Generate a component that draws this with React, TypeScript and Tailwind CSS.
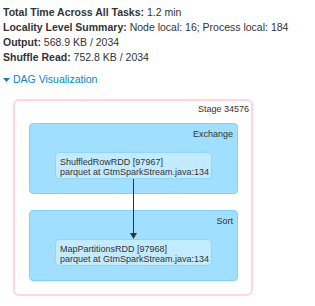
import React from "react";

const summary = [
  { label: "Total Time Across All Tasks:", value: "1.2 min" },
  { label: "Locality Level Summary:", value: "Node local: 16; Process local: 184" },
  { label: "Output:", value: "568.9 KB / 2034" },
  { label: "Shuffle Read:", value: "752.8 KB / 2034" },
];

function Cluster({ name, rdd }: { name: string; rdd: string }) {
  return (
    <div className="ml-[14px] w-[209px] h-[71px] bg-[#a0dfff] border border-[#7fd2ff] rounded-[4px]">
      <div className="pt-[5px] pr-[4px] text-right leading-[10px]">{name}</div>
      <div className="mt-[13px] ml-[25px] w-[157px] h-[27px] bg-[#c3ebff] border border-[#8fd6ff] rounded-[4px] pt-[4px] pl-[4px] leading-[10px]">
        <div>{rdd}</div>
        <div>parquet at GtmSparkStream.java:134</div>
      </div>
    </div>
  );
}

export default function App() {
  return (
    <div className="w-[315px] h-[306px] bg-white font-['Liberation_Sans',Arial,sans-serif] text-[#333]">
      <div className="pt-[5px] pl-[3px] text-[10.5px] leading-[15px]">
        {summary.map((s) => (
          <div key={s.label}>
            <strong className="font-bold">{s.label}</strong> {s.value}
          </div>
        ))}
        <div className="mt-[7px] flex items-center text-[#0088cc]">
          <svg width="7" height="4" viewBox="0 0 7 4" className="mr-[3px]">
            <polygon points="0,0 7,0 3.5,4" fill="#0088cc" />
          </svg>
          DAG Visualization
        </div>
      </div>

      {/* stage */}
      <div className="relative ml-[13px] mt-[12px] w-[240px] h-[197px] border-2 border-[#ffd6dd] rounded-[6px] text-[9px]">
        <div className="pt-[3px] pr-[2px] text-right leading-[10px]">Stage 34576</div>
        <div className="mt-[9px]">
          <Cluster name="Exchange" rdd="ShuffledRowRDD [97967]" />
        </div>
        <div className="mt-[16px]">
          <Cluster name="Sort" rdd="MapPartitionsRDD [97968]" />
        </div>
        <svg width="7" height="60" viewBox="0 0 7 60" className="absolute left-[115px] top-[78px]">
          <line x1="3.5" y1="0" x2="3.5" y2="55" stroke="#333" strokeWidth="1" />
          <polygon points="0,54 7,54 3.5,60" fill="#333" />
        </svg>
      </div>
    </div>
  );
}
